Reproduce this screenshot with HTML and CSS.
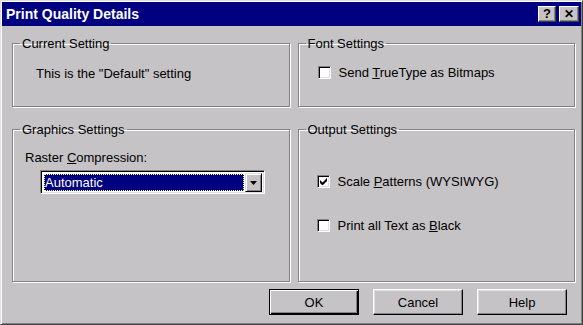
FILE: index.html
```html
<!DOCTYPE html>
<html>
<head>
<title>Print Quality Details</title>
<link rel="stylesheet" href="styles.css">
</head>
<body>
<div class="window">
  <div class="titlebar">
    <span class="title">Print Quality Details</span>
    <span class="tbtn">?</span>
    <span class="tbtn tclose">&#x2715;</span>
  </div>
  <div class="content">
    <div class="groups">
      <fieldset class="group g-current">
        <legend>Current Setting</legend>
        <div class="note">This is the "Default" setting</div>
      </fieldset>
      <fieldset class="group g-font">
        <legend>Font Settings</legend>
        <div class="check"><span class="box"></span><span>Send <u>T</u>rueType as Bitmaps</span></div>
      </fieldset>
      <fieldset class="group g-graphics">
        <legend>Graphics Settings</legend>
        <div class="field-label">Raster <u>C</u>ompression:</div>
        <div class="combo">
          <span class="combo-value">Automatic</span>
          <span class="combo-btn">
            <svg width="7" height="4" viewBox="0 0 7 4"><path d="M0 0h7L3.5 4z" fill="#000"/></svg>
          </span>
        </div>
      </fieldset>
      <fieldset class="group g-output">
        <legend>Output Settings</legend>
        <div class="check"><span class="box">
          <svg width="7" height="7" viewBox="0 0 7 7"><path d="M0 2v3l2 2h1l4-4V0L2.5 4.5z" fill="#000"/></svg>
        </span><span>Scale <u>P</u>atterns (WYSIWYG)</span></div>
        <div class="check second"><span class="box"></span><span>Print all Text as <u>B</u>lack</span></div>
      </fieldset>
    </div>
    <div class="buttons">
      <button class="button default">OK</button>
      <button class="button">Cancel</button>
      <button class="button">Help</button>
    </div>
  </div>
</div>
</body>
</html>
```

FILE: styles.css
```css
body {
  margin: 0;
  background: #c6c3c6;
  font-family: "Liberation Sans", Arial, sans-serif;
  font-size: 13px;
  color: #000;
}

.window {
  width: 583px;
  height: 325px;
  box-sizing: border-box;
  border: 1px solid;
  border-color: #dfdfdf #404040 #404040 #dfdfdf;
  box-shadow: inset 1px 1px #fff, inset -1px -1px #848284;
  padding: 1px;
  background: #c6c3c6;
}

.titlebar {
  height: 24px;
  background: #000080;
  color: #fff;
  display: flex;
  align-items: center;
  padding: 0 2px 0 4px;
  gap: 3px;
}
.title {
  flex: 1;
  font-weight: bold;
  font-size: 14px;
}
.tbtn {
  width: 18px;
  height: 16px;
  box-sizing: border-box;
  background: #c6c3c6;
  color: #000;
  border: 1px solid;
  border-color: #fff #404040 #404040 #fff;
  box-shadow: inset -1px -1px #848284;
  font-weight: bold;
  font-size: 13px;
  line-height: 14px;
  text-align: center;
}
.tclose {
  width: 20px;
  font-size: 12px;
}

.content {
  padding: 10px 6px 0 10px;
}

.groups {
  display: grid;
  grid-template-columns: 1fr 1fr;
  grid-template-rows: 71px 160px;
  column-gap: 8px;
  row-gap: 15px;
}

.group {
  margin: 0;
  padding: 0;
  min-width: 0;
  box-sizing: border-box;
  border: 1px solid #848284;
  box-shadow: inset 1px 1px #fff, 1px 1px #fff;
}
.group legend {
  margin-left: 7px;
  padding: 0 2px;
  line-height: 15px;
}

.note {
  padding: 15px 0 0 23px;
  line-height: 15px;
}

.check {
  display: flex;
  align-items: center;
  gap: 8px;
  line-height: 15px;
}
.g-font .check {
  padding: 14px 0 0 19px;
}
.g-output .check {
  padding: 37px 0 0 18px;
}
.g-output .check.second {
  padding-top: 29px;
}
.box {
  width: 13px;
  height: 13px;
  box-sizing: border-box;
  background: #fff;
  border: 1px solid;
  border-color: #848284 #fff #fff #848284;
  box-shadow: inset 1px 1px #000, inset -1px -1px #dfdfdf;
  display: flex;
  align-items: center;
  justify-content: center;
}

.field-label {
  padding: 13px 0 0 12px;
  line-height: 15px;
}

.combo {
  margin: 5px 0 0 27px;
  width: 225px;
  height: 24px;
  box-sizing: border-box;
  border: 1px solid;
  border-color: #848284 #fff #fff #848284;
  box-shadow: inset 1px 1px #000, inset -1px -1px #dfdfdf;
  background: #fff;
  padding: 3px 3px 2px 3px;
  display: flex;
  gap: 1px;
}
.combo-value {
  flex: 1;
  background: #000080;
  color: #fff;
  outline: 1px dotted #ffff80;
  outline-offset: -1px;
  padding-left: 1px;
  line-height: 17px;
}
.combo-btn {
  width: 17px;
  box-sizing: border-box;
  background: #c6c3c6;
  border: 1px solid;
  border-color: #dfdfdf #000 #000 #dfdfdf;
  box-shadow: inset 1px 1px #fff, inset -1px -1px #848284;
  display: flex;
  align-items: center;
  justify-content: center;
  margin: -1px -1px -1px 0;
}

.buttons {
  display: flex;
  justify-content: flex-end;
  gap: 14px;
  margin-top: 7px;
  padding-right: 8px;
}
.button {
  width: 90px;
  height: 26px;
  box-sizing: border-box;
  background: #c6c3c6;
  font-family: inherit;
  font-size: 13px;
  color: #000;
  border: 1px solid;
  border-color: #fff #000 #000 #fff;
  box-shadow: inset -1px -1px #848284, inset 1px 1px #dfdfdf;
  padding: 0;
}
.button.default {
  border-color: #000;
  box-shadow: inset 1px 1px #fff, inset -1px -1px #000, inset -2px -2px #848284;
}
```
